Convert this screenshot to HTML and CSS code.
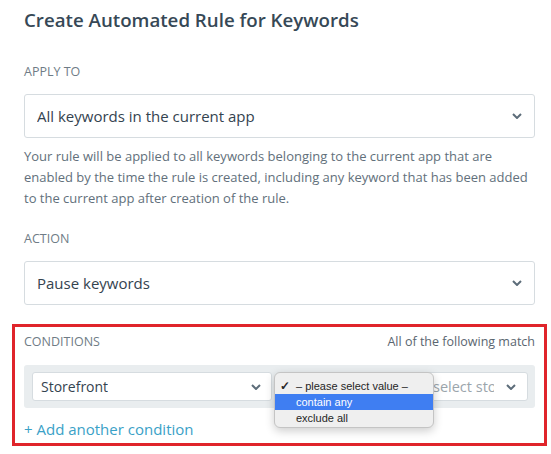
FILE: index.html
```html
<!DOCTYPE html>
<html lang="en">
<head>
  <meta charset="UTF-8">
  <title>Create Automated Rule for Keywords</title>
  <meta name="viewport" content="width=device-width, initial-scale=1.0">
  <link rel="stylesheet" href="styles.css">
</head>
<body>
  <h1>Create Automated Rule for Keywords</h1>

  <div class="label">Apply to</div>
  <div class="select">
    <span>All keywords in the current app</span>
    <svg class="chev" width="10" height="6" viewBox="0 0 10 6"><path d="M1 1l4 4 4-4"/></svg>
  </div>
  <p class="help">
    Your rule will be applied to all keywords belonging to the current app that are
    enabled by the time the rule is created, including any keyword that has been added
    to the current app after creation of the rule.
  </p>

  <div class="label action">Action</div>
  <div class="select">
    <span>Pause keywords</span>
    <svg class="chev" width="10" height="6" viewBox="0 0 10 6"><path d="M1 1l4 4 4-4"/></svg>
  </div>

  <div class="conditions">
    <div class="cond-head">
      <span class="label">Conditions</span>
      <span class="match">All of the following match</span>
    </div>
    <div class="cond-row">
      <div class="select small first">
        <span>Storefront</span>
        <svg class="chev" width="10" height="6" viewBox="0 0 10 6"><path d="M1 1l4 4 4-4"/></svg>
      </div>
      <!-- operator select, covered by its open menu -->
      <div class="select small second">
        <span></span>
        <svg class="chev" width="10" height="6" viewBox="0 0 10 6"><path d="M1 1l4 4 4-4"/></svg>
      </div>
      <div class="select small third">
        <span class="placeholder">select storefront</span>
        <svg class="chev" width="10" height="6" viewBox="0 0 10 6"><path d="M1 1l4 4 4-4"/></svg>
      </div>

      <ul class="menu">
        <li><span class="check">✓</span>– please select value –</li>
        <li class="active"><span class="check"></span>contain any</li>
        <li><span class="check"></span>exclude all</li>
      </ul>
    </div>
    <a class="add" href="#">+ Add another condition</a>
  </div>
</body>
</html>
```

FILE: styles.css
```css
body {
  margin: 0;
  padding: 8px 16px 0 24px;
  font-family: "Open Sans", sans-serif;
  background: #fff;
  color: #34434f;
}
h1 {
  margin: 0;
  font-size: 18.7px;
  line-height: 24px;
  font-weight: 600;
  color: #364856;
}
.label {
  margin-top: 31px;
  margin-bottom: 13px;
  font-size: 12.5px;
  line-height: 18px;
  text-transform: uppercase;
  color: #6f7c86;
}
.label.action {
  margin-top: 21px;
}
.select {
  display: flex;
  align-items: center;
  justify-content: space-between;
  height: 44px;
  box-sizing: border-box;
  padding: 0 12px;
  border: 1px solid #d6dce0;
  border-radius: 3px;
  background: #fff;
  font-size: 15px;
}
.select span {
  white-space: nowrap;
  overflow: hidden;
}
.chev {
  flex-shrink: 0;
  fill: none;
  stroke: #5d6d7a;
  stroke-width: 2;
}
.help {
  margin: 8px 0 0;
  font-size: 13px;
  line-height: 21px;
  color: #62707b;
}
.conditions {
  margin: 19px -12px 0;
  padding: 6px 9px 4px;
  border: 3px solid #e0242a;
}
.cond-head {
  display: flex;
  justify-content: space-between;
  align-items: center;
}
.cond-head .label {
  margin: 0;
}
.match {
  font-size: 12.5px;
  line-height: 18px;
  color: #5a6670;
}
.cond-row {
  position: relative;
  display: flex;
  gap: 8px;
  margin-top: 14px;
  padding: 7px 7px 7px 8px;
  background: #e9edef;
  border-radius: 3px;
}
.select.small {
  height: 29px;
  padding: 0 10px 0 8px;
  font-size: 14px;
}
.select.first {
  flex: none;
  width: 240px;
}
.select.second {
  flex: none;
  width: 135px;
}
.select.third {
  flex: 1;
  min-width: 0;
  padding-left: 9px;
  padding-right: 11px;
}
.select .placeholder {
  flex: 1;
  min-width: 0;
  margin-right: 12px;
  font-size: 14.5px;
  color: #9ba5ac;
}
.menu {
  position: absolute;
  left: 250px;
  top: 7px;
  width: 160px;
  box-sizing: border-box;
  margin: 0;
  padding: 5px 0 1px;
  list-style: none;
  background: #efefef;
  border: 1px solid #c4c4c4;
  border-radius: 6px;
  box-shadow: 0 3px 10px rgba(0, 0, 0, 0.2);
  font-family: "Liberation Sans", sans-serif;
  font-size: 11px;
  color: #262626;
}
.menu li {
  display: flex;
  align-items: center;
  height: 16px;
  padding-left: 5px;
}
.menu li.active {
  background: #3f7ef2;
  color: #fff;
}
.check {
  width: 16px;
  font-size: 12px;
  font-weight: bold;
}
.add {
  display: block;
  margin-top: 11px;
  font-size: 15px;
  line-height: 20px;
  color: #3aa1c7;
  text-decoration: none;
}
```
